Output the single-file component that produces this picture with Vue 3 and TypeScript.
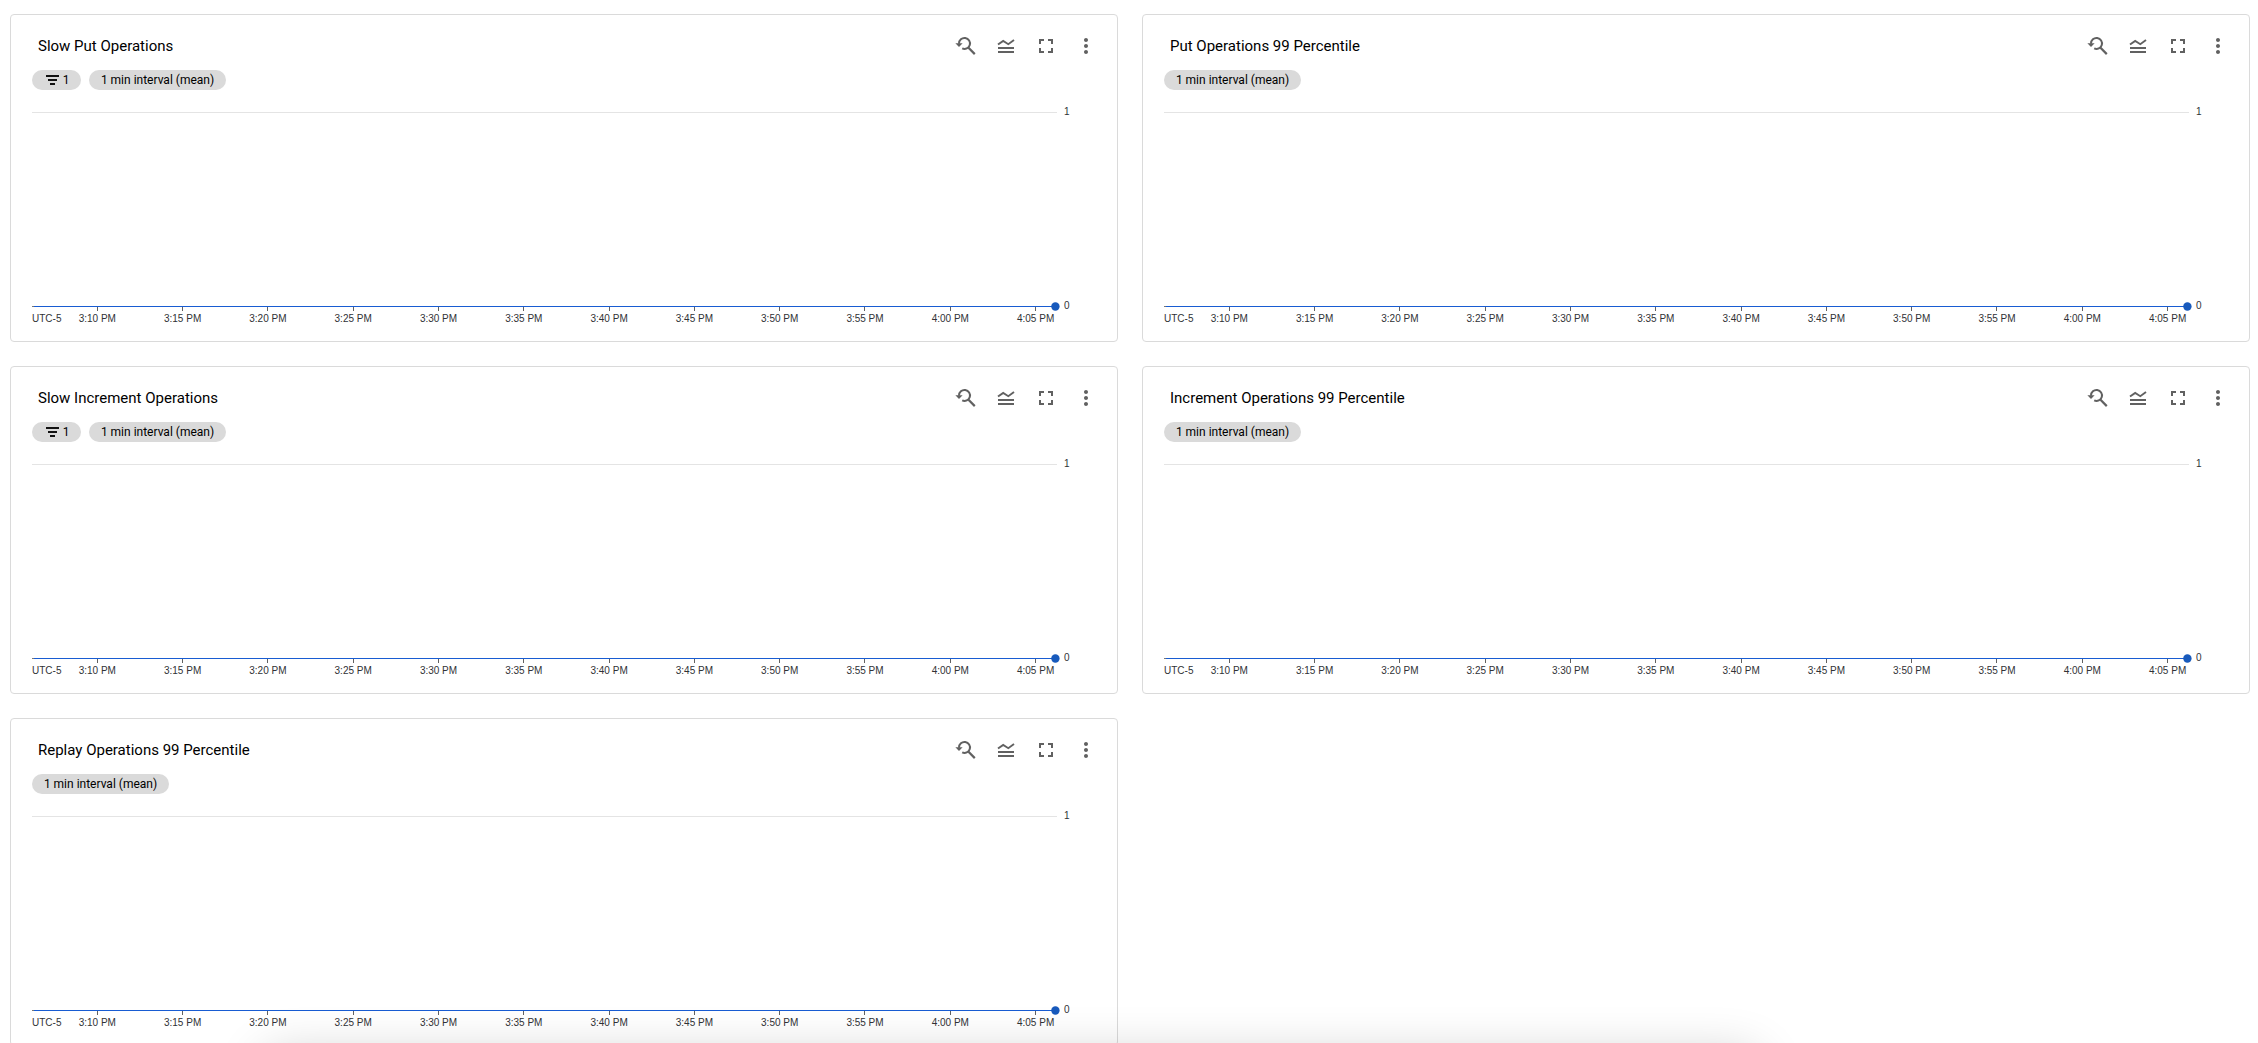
<script setup lang="ts">
interface Panel {
  title: string
  filters?: number
}

const panels: Panel[] = [
  { title: 'Slow Put Operations', filters: 1 },
  { title: 'Put Operations 99 Percentile' },
  { title: 'Slow Increment Operations', filters: 1 },
  { title: 'Increment Operations 99 Percentile' },
  { title: 'Replay Operations 99 Percentile' },
]

const times = ['3:10', '3:15', '3:20', '3:25', '3:30', '3:35', '3:40', '3:45', '3:50', '3:55', '4:00', '4:05']
const ticks = times.map((time, i) => {
  const x = 65.3 + i * 85.3
  return { x, line: Math.floor(x) + 0.5, label: `${time} PM` }
})
</script>

<template>
  <main class="board">
    <section v-for="panel in panels" :key="panel.title" class="card">
      <header class="head">
        <h2 class="title">{{ panel.title }}</h2>
        <div class="actions">
          <svg class="icon" viewBox="0 0 24 24">
            <g fill="none" stroke="#616161" stroke-width="2">
              <path d="M5 9.8V9.4a5.5 5.5 0 1 1 3.2 5" />
              <path d="M14.5 13.8L20.8 20.1" stroke-width="2.2" />
            </g>
            <path d="M1.4 9.3h7.2L5 12.9z" fill="#616161" />
          </svg>
          <svg class="icon" viewBox="0 0 24 24">
            <path d="M4 10.6L9.2 6.9L14.3 10.2L20 5.9" fill="none" stroke="#616161" stroke-width="1.9" />
            <path d="M4 13h16v2H4zM4 17h16v2H4z" fill="#616161" />
          </svg>
          <svg class="icon" viewBox="0 0 24 24">
            <path d="M7 14H5v5h5v-2H7v-3zm-2-4h2V7h3V5H5v5zm12 7h-3v2h5v-5h-2v3zM14 5v2h3v3h2V5h-5z" fill="#616161" />
          </svg>
          <svg class="icon" viewBox="0 0 24 24">
            <path d="M12 8c1.1 0 2-.9 2-2s-.9-2-2-2-2 .9-2 2 .9 2 2 2zm0 2c-1.1 0-2 .9-2 2s.9 2 2 2 2-.9 2-2-.9-2-2-2zm0 6c-1.1 0-2 .9-2 2s.9 2 2 2 2-.9 2-2-.9-2-2-2z" fill="#616161" />
          </svg>
        </div>
      </header>
      <div class="chips">
        <span v-if="panel.filters" class="chip filter">
          <svg class="funnel" viewBox="0 0 13 10">
            <path d="M0 0h13v2H0zM2 4h9v2H2zM4 8h5v2H4z" fill="#111" />
          </svg>
          {{ panel.filters }}
        </span>
        <span class="chip">1 min interval (mean)</span>
      </div>
      <svg class="chart" width="1060" height="230" viewBox="0 0 1060 230">
        <path d="M0 12.5H1025" stroke="#e4e4e4" />
        <text x="1032" y="15">1</text>
        <path d="M0 206.5H1025" stroke="#757575" />
        <g v-for="tick in ticks" :key="tick.label">
          <path :d="`M${tick.line} 207V211`" stroke="#616161" />
          <text :x="tick.x" y="222" text-anchor="middle">{{ tick.label }}</text>
        </g>
        <text x="0" y="222">UTC-5</text>
        <path d="M2 206.5H1023" stroke="#185cd2" />
        <circle cx="1023.4" cy="206.5" r="4.2" fill="#185abc" />
        <text x="1032" y="209">0</text>
      </svg>
    </section>
    <div class="dock-shadow"></div>
  </main>
</template>

<style>
body {
  margin: 0;
  background: #fff;
}
</style>

<style scoped>
.board {
  position: relative;
  box-sizing: border-box;
  width: 2258px;
  height: 1043px;
  padding: 14px 8px 0 10px;
  display: grid;
  grid-template-columns: 1108px 1108px;
  grid-auto-rows: 328px;
  gap: 24px;
  overflow: hidden;
  background: #fff;
  font-family: Roboto, sans-serif;
}
.card {
  box-sizing: border-box;
  border: 1px solid #dadada;
  border-radius: 4px;
  padding: 11px 0 0 21px;
  background: #fff;
}
.head {
  display: flex;
  justify-content: space-between;
  height: 40px;
  padding: 0 19px 0 6px;
}
.title {
  margin: 0;
  font-size: 15px;
  font-weight: 400;
  line-height: 40px;
  color: #000;
  white-space: nowrap;
}
.actions {
  display: flex;
  align-items: center;
  gap: 16px;
}
.icon {
  width: 24px;
  height: 24px;
}
.chips {
  display: flex;
  gap: 8px;
  height: 20px;
  margin-top: 4px;
}
.chip {
  box-sizing: border-box;
  display: flex;
  align-items: center;
  justify-content: center;
  width: 137px;
  height: 20px;
  border-radius: 10px;
  background: #dadada;
  color: #000;
  font-size: 12px;
  line-height: 20px;
  white-space: nowrap;
}
.filter {
  width: 49px;
  gap: 4px;
  padding-left: 2px;
}
.funnel {
  width: 13px;
  height: 10px;
}
.chart {
  display: block;
  margin-top: 10px;
}
.chart text {
  font-family: "Liberation Sans", Arial, sans-serif;
  font-size: 10px;
  fill: #303236;
}
.dock-shadow {
  position: absolute;
  left: 264px;
  top: 1055px;
  width: 1494px;
  height: 60px;
  border-radius: 12px;
  box-shadow: 0 0 50px rgba(0, 0, 0, 0.2);
}
</style>
